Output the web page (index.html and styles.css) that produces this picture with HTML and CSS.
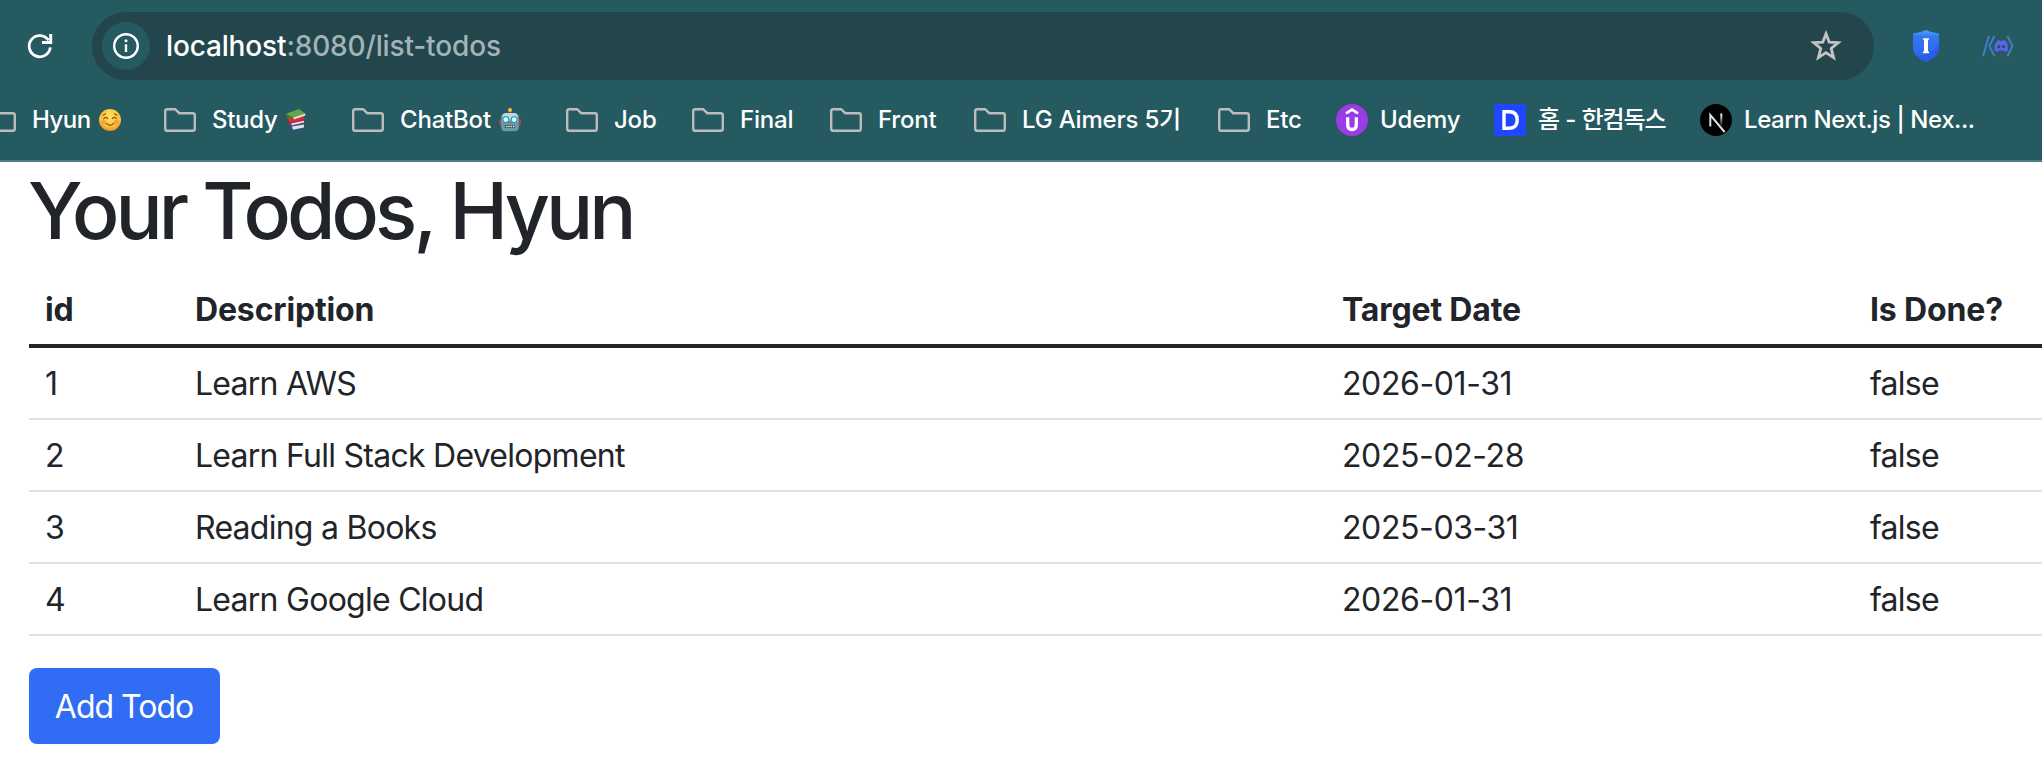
FILE: index.html
```html
<!DOCTYPE html>
<html lang="en">
<head>
<meta charset="utf-8">
<title>Your Todos</title>
<link rel="stylesheet" href="styles.css">
</head>
<body>
<svg class="defs" width="0" height="0" aria-hidden="true">
  <symbol id="folder" viewBox="0 0 32 24"><path d="M3.2 1.2H11.2L15.2 5.2H28.8Q30.8 5.2 30.8 7.2V20.8Q30.8 22.8 28.8 22.8H3.2Q1.2 22.8 1.2 20.8V3.2Q1.2 1.2 3.2 1.2Z" fill="none" stroke="#bdbbbd" stroke-width="2.4"/></symbol>
</svg>
<header class="browser">
  <div class="toolbar">
    <svg class="reload" viewBox="0 0 28 28"><path d="M24.3 15.4A10.6 10.6 0 1 1 22.6 8.3" fill="none" stroke="#fff" stroke-width="2.8"/><path d="M24.7 2V10.4H16" fill="none" stroke="#fff" stroke-width="3"/></svg>
    <div class="omnibox">
      <span class="site-info"><svg viewBox="0 0 28 28"><circle cx="14" cy="14" r="11.8" fill="none" stroke="#fff" stroke-width="2.4"/><path d="M14 12.3V20" stroke="#fff" stroke-width="2.4"/><circle cx="14" cy="8.8" r="1.5" fill="#fff"/></svg></span>
      <span class="url"><span class="host">localhost</span>:8080/list-todos</span>
      <svg class="star" viewBox="0 0 32 32"><path d="M16 3.8L19.2 12.2L28.2 12.7L21.2 18.4L23.6 27.6L16 22.6L8.4 27.6L10.8 18.4L3.8 12.7L12.8 12.2Z" fill="none" stroke="#c6c4c4" stroke-width="2.8"/></svg>
    </div>
    <svg class="shield" viewBox="0 0 26 32"><defs><linearGradient id="sg" x1="0" y1="0" x2="0" y2="1"><stop offset="0" stop-color="#48a8f8"/><stop offset=".2" stop-color="#3478f4"/><stop offset="1" stop-color="#2862ec"/></linearGradient></defs><path d="M13 0Q19 3 26 3.6V18Q26 27 13 32Q0 27 0 18V3.6Q7 3 13 0Z" fill="url(#sg)"/><path d="M26 14V18Q26 27 13 32Q7 29.7 4 26.5Q19 25 26 14Z" fill="#2459e6" opacity=".7"/><path d="M10 8.2H16V9.8H15V21.6H16V23.2H10V21.6H11V9.8H10Z" fill="#fff"/></svg>
    <svg class="discord" viewBox="0 0 32 22"><path d="M7 .8L1 21.2M12.5 .8L7.4 11L12.5 21.2M25.5 .8L30.4 11L25.5 21.2" fill="none" stroke="#427cc7" stroke-width="2"/><path d="M15.5 5.6L17.2 5L18 6H20.4L21.3 5L23.2 5.6Q26.7 10 25.8 15.2L22.8 17L21.6 15.4H16.8L15.6 17L12.5 15.2Q11.8 10 15.5 5.6Z" fill="#5b62ee"/><circle cx="16.8" cy="11.7" r="1.6" fill="#25505e"/><circle cx="21.6" cy="11.7" r="1.6" fill="#25505e"/></svg>
  </div>
  <nav class="bookmarks">
    <a class="bm"><svg class="fold"><use href="#folder"/></svg><span class="t-hyun">Hyun</span>
      <svg class="emoji" viewBox="0 0 22 22"><defs><radialGradient id="fg" cx=".5" cy=".35" r=".65"><stop offset="0" stop-color="#ffe55c"/><stop offset=".7" stop-color="#fcc33c"/><stop offset="1" stop-color="#e98d22"/></radialGradient></defs><circle cx="11" cy="11" r="11" fill="url(#fg)"/><circle cx="4.6" cy="13" r="2.5" fill="#f78036" opacity=".55"/><circle cx="17.4" cy="13" r="2.5" fill="#f78036" opacity=".55"/><path d="M4.7 9.6Q6.7 7.2 8.7 9.6M13.3 9.6Q15.3 7.2 17.3 9.6M7.3 14.4Q11 18.2 14.7 14.4M4 6.2L6.5 4.8M18 6.2L15.5 4.8" fill="none" stroke="#85501d" stroke-width="1.2" stroke-linecap="round"/></svg></a>
    <a class="bm"><svg class="fold"><use href="#folder"/></svg><span class="t-study">Study</span>
      <svg class="emoji" viewBox="0 0 22 22"><path d="M4 16L17 14.5L19.5 18.5L8 22Z" fill="#334c9b"/><path d="M7 17.5L19 15.5V18.5L8 20.8Z" fill="#dce1e7"/><path d="M2.5 11L6 16.8L19 14V9.5Z" fill="#b72532"/><path d="M6 14.6L19 11.8V13.4L7 16.2Z" fill="#e9e0e0"/><path d="M1.5 7.8L5 13.5L19.5 9.8V7Z" fill="#d32f3b"/><path d="M1 4.7L13.8 0L20.3 4.6L8.2 8.8Z" fill="#66a64b"/><path d="M8.2 8.8L20.3 4.6V6.6L8.8 10.6Z" fill="#e8eadf"/><path d="M1 4.7L8.2 8.8L8.8 11.5L1.2 7Z" fill="#417d36"/></svg></a>
    <a class="bm"><svg class="fold"><use href="#folder"/></svg><span class="t-chat">ChatBot</span>
      <svg class="emoji robot" viewBox="0 0 22 24"><path d="M11 2V6" stroke="#c8372e" stroke-width="3"/><circle cx="11" cy="2" r="2" fill="#f5c13c"/><rect x="0" y="11" width="22" height="7" rx="2" fill="#b4403b"/><rect x="2.2" y="5.2" width="17.6" height="18" rx="4" fill="#659cac"/><path d="M3 11Q3 5 7 5H15Q19 5 19 11V14H3Z" fill="#b8dce3"/><circle cx="6.8" cy="11.6" r="3" fill="#e8ffff" stroke="#259fbd" stroke-width="1.4"/><circle cx="15.2" cy="11.6" r="3" fill="#e8ffff" stroke="#259fbd" stroke-width="1.4"/><path d="M11 12L12.5 15H9.5Z" fill="#d74534"/><rect x="6" y="17" width="10" height="3" fill="#34505b"/><path d="M7 18.5H15.5" stroke="#e7e8df" stroke-width="1.6" stroke-dasharray="1.6 .7"/></svg></a>
    <a class="bm"><svg class="fold"><use href="#folder"/></svg><span class="t-job">Job</span></a>
    <a class="bm"><svg class="fold"><use href="#folder"/></svg><span class="t-final">Final</span></a>
    <a class="bm"><svg class="fold"><use href="#folder"/></svg><span class="t-front">Front</span></a>
    <a class="bm"><svg class="fold"><use href="#folder"/></svg><span class="t-lg">LG Aimers 5기</span></a>
    <a class="bm"><svg class="fold"><use href="#folder"/></svg><span class="t-etc">Etc</span></a>
    <a class="bm site"><svg class="fav" viewBox="0 0 32 32"><circle cx="16" cy="16" r="16" fill="#9a3ce8"/><path d="M10 9.4L16 5.6L22 9.4" fill="none" stroke="#fff" stroke-width="2.8"/><path d="M11.7 13.2V20.8Q11.7 25.5 16 25.5Q20.3 25.5 20.3 20.8V13.2" fill="none" stroke="#fff" stroke-width="3.3"/></svg><span class="t-udemy">Udemy</span></a>
    <a class="bm site"><svg class="fav" viewBox="0 0 32 32"><path d="M0 0H32V32H0Z" fill="#2046ff"/><path d="M10 7.8H15.5Q23.2 7.8 23.2 16Q23.2 24.2 15.5 24.2H10Z" fill="none" stroke="#fff" stroke-width="3.4"/></svg><span class="t-home">홈 <span class="dash">-</span> 한컴독스</span></a>
    <a class="bm site"><svg class="fav" viewBox="0 0 32 32"><defs><linearGradient id="ng" x1="0" y1="0" x2="0" y2="1"><stop offset="0" stop-color="#fff"/><stop offset="1" stop-color="#fff" stop-opacity=".1"/></linearGradient></defs><circle cx="16" cy="16" r="16" fill="#000"/><path d="M10.3 22.4V11L24.6 28" fill="none" stroke="#ddd" stroke-width="2"/><rect x="20.3" y="9.5" width="2" height="12" fill="url(#ng)"/></svg><span class="t-next">Learn Next.js | Nex...</span></a>
  </nav>
</header>
<main class="page">
  <h1><span>Your Todos, Hyun</span></h1>
  <table class="todos">
    <colgroup><col class="c-id"><col class="c-desc"><col class="c-date"><col class="c-done"></colgroup>
    <thead><tr><th>id</th><th>Description</th><th>Target Date</th><th>Is Done?</th></tr></thead>
    <tbody>
      <tr><td>1</td><td>Learn AWS</td><td class="date">2026-01-31</td><td>false</td></tr>
      <tr><td>2</td><td>Learn Full Stack Development</td><td class="date">2025-02-28</td><td>false</td></tr>
      <tr><td>3</td><td>Reading a Books</td><td class="date">2025-03-31</td><td>false</td></tr>
      <tr><td>4</td><td>Learn Google Cloud</td><td class="date">2026-01-31</td><td>false</td></tr>
    </tbody>
  </table>
  <a class="btn">Add Todo</a>
</main>
</body>
</html>
```
FILE: styles.css
```css
* { box-sizing: border-box; }
body { margin: 0; width: 2042px; height: 784px; overflow: hidden; background: #fff; color: #212529; font-family: Inter, "Noto Sans CJK KR", sans-serif; }
svg { display: block; flex: none; }
.defs { position: absolute; }
.browser { height: 162px; background: #255a60; border-bottom: 2px solid #4c7d82; padding-top: 12px; color: #fff; }
.toolbar { display: flex; align-items: center; height: 68px; padding-left: 26px; }
.reload { width: 28px; height: 28px; margin-right: 38px; }
.omnibox { width: 1782px; height: 68px; border-radius: 34px; background: #22464c; display: flex; align-items: center; padding: 0 32px 0 10px; }
.site-info { width: 48px; height: 48px; border-radius: 50%; background: #255a60; display: flex; align-items: center; justify-content: center; flex: none; }
.site-info svg { width: 28px; height: 28px; }
.url { margin-left: 16px; font-size: 28px; line-height: 40px; color: #a3b4b6; flex: 1; white-space: nowrap; font-weight: 450; letter-spacing: -0.15px; }
.host { color: #fff; }
.star { width: 32px; height: 32px; }
.shield { width: 26px; height: 32px; margin-left: 39px; }
.discord { width: 32px; height: 22px; margin-left: 43px; }
.bookmarks { display: grid; grid-template-columns: 180px 188px 214px 126px 138px 144px 244px 118px 158px 206px 330px; margin-left: -16px; height: 80px; align-items: center; }
.bm { display: flex; align-items: center; height: 32px; white-space: nowrap; font-size: 24px; line-height: 32px; font-weight: 500; letter-spacing: -0.2px; }
.fold { width: 32px; height: 24px; margin-right: 16px; }
.fav { width: 32px; height: 32px; margin-right: 12px; }
.emoji { width: 22px; height: 22px; margin-left: 8px; }
.robot { height: 24px; }
.t-hyun { letter-spacing: -0.5px; }
.t-study { letter-spacing: -0.3px; }
.t-home { letter-spacing: -1.1px; }
.dash { margin: 0 1px; }
.t-next { letter-spacing: -0.42px; }
.page { padding-left: 29px; }
h1 { margin: 0 0 0 -1px; padding-top: 1px; height: 112px; font-size: 78.5px; line-height: 96px; font-weight: 500; letter-spacing: -3.9px; white-space: nowrap; }
.todos { width: 2058px; table-layout: fixed; border-collapse: separate; border-spacing: 0; font-size: 32px; line-height: 48px; }
.c-id { width: 150px; }
.c-desc { width: 1147px; }
.c-date { width: 528px; }
.c-done { width: 233px; }
.todos th, .todos td { text-align: left; padding: 2px 16px 0; height: 72px; border-bottom: 2px solid #dee2e6; white-space: nowrap; letter-spacing: -0.74px; }
.todos .date { letter-spacing: -0.4px; }
.todos th { height: 74px; font-weight: 700; letter-spacing: -0.15px; border-bottom: 4px solid #212529; }
.btn { display: flex; align-items: center; justify-content: center; width: 191px; height: 76px; margin-top: 32px; padding: 2px 1px 0 0; border-radius: 8px; background: #316cf4; color: #fff; font-size: 32px; line-height: 48px; letter-spacing: -1px; white-space: nowrap; }
```
